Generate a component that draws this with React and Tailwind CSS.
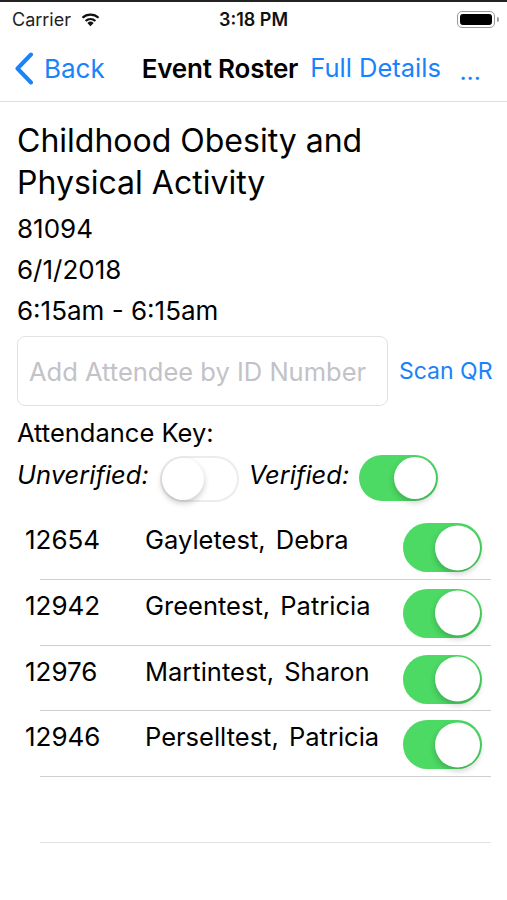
import { useState } from 'react'

const font = { fontFamily: 'Inter, "Noto Sans", sans-serif' }

const Toggle = ({ on, onChange, size = 'lg' }) => {
  const box = size === 'lg' ? 'w-[79px] h-[49px]' : 'w-[79px] h-[46px]'
  const knob = size === 'lg' ? 'w-[45px] h-[45px]' : 'w-[42px] h-[42px]'
  return (
    <button
      onClick={onChange}
      className={`relative shrink-0 rounded-full ${box} ${
        on ? 'bg-[#4cd964]' : 'bg-white border-2 border-[#ececec]'
      }`}
    >
      <span
        className={`absolute top-1/2 -translate-y-1/2 rounded-full bg-white shadow-[0_3px_6px_rgba(0,0,0,0.22)] ${knob} ${
          on ? 'right-[2px]' : 'left-0'
        }`}
      />
    </button>
  )
}

const attendees = [
  { id: '12654', name: 'Gayletest, Debra' },
  { id: '12942', name: 'Greentest, Patricia' },
  { id: '12976', name: 'Martintest, Sharon' },
  { id: '12946', name: 'Perselltest, Patricia' },
]

export default function App() {
  const [checked, setChecked] = useState(attendees.map(() => true))
  const [keyOff, setKeyOff] = useState(false)
  const [keyOn, setKeyOn] = useState(true)

  return (
    <div className="w-[507px] h-[900px] bg-white text-black overflow-hidden" style={font}>
      {/* status bar */}
      <div className="border-t-2 border-[#222] h-[36px] flex items-center pl-[12px] pr-[8px] relative">
        <div className="flex items-center gap-[9px] text-[18px] text-[#222]">
          <span>Carrier</span>
          <svg width="21" height="16" viewBox="0 0 20 15">
            <path d="M10 14.5 L7 11.2 A4.5 4.5 0 0 1 13 11.2 Z" fill="#111" />
            <path d="M4.6 8.6 A8 8 0 0 1 15.4 8.6 L13.9 10.2 A6 6 0 0 0 6.1 10.2 Z" fill="#111" />
            <path d="M1.6 5.5 A12.5 12.5 0 0 1 18.4 5.5 L16.9 7.1 A10.3 10.3 0 0 0 3.1 7.1 Z" fill="#111" />
          </svg>
        </div>
        <div className="absolute left-1/2 -translate-x-1/2 text-[18px] font-semibold text-[#111]">3:18 PM</div>
        <div className="ml-auto flex items-center gap-[2px]">
          <div className="w-[38px] h-[17px] rounded-[5px] border-[1.5px] border-[#999] p-[2px]">
            <div className="w-full h-full bg-black rounded-[3px]" />
          </div>
          <div className="w-[2px] h-[5px] bg-[#999] rounded-r" />
        </div>
      </div>

      {/* nav bar */}
      <div className="h-[66px] flex items-center border-b border-[#dedede] pl-[14px] pr-[26px]">
        <button className="flex items-center gap-[10px] text-[#1a82fb] text-[26px]">
          <svg width="20" height="33" viewBox="0 0 20 33">
            <path d="M17 2.5 L3.5 16.5 L17 30.5" fill="none" stroke="#1a82fb" strokeWidth="4" strokeLinecap="round" strokeLinejoin="round" />
          </svg>
          <span>Back</span>
        </button>
        <div className="ml-[37px] text-[26px] font-semibold tracking-[-0.2px]">Event Roster</div>
        <div className="ml-[12px] text-[25.5px] text-[#1a82fb]">Full Details</div>
        <div className="ml-auto text-[25px] text-[#1a82fb] leading-none mt-[6px]">...</div>
      </div>

      {/* event details */}
      <div className="px-[17px] pt-[18px]">
        <h1 className="w-[380px] text-[32px] leading-[42px]">Childhood Obesity and Physical Activity</h1>
        <div className="mt-[4px] text-[26px] leading-[41px]">
          <div>81094</div>
          <div>6/1/2018</div>
          <div>6:15am - 6:15am</div>
        </div>

        <div className="flex items-center mt-[5px]">
          <input
            placeholder="Add Attendee by ID Number"
            className="shrink-0 w-[371px] h-[70px] rounded-[8px] border border-[#e2e2e2] px-[11px] text-[25.5px] placeholder:text-[#c2c2c7] outline-none"
          />
          <button className="ml-[11px] whitespace-nowrap text-[23px] text-[#1a82fb]">Scan QR</button>
        </div>

        <div className="mt-[9px] text-[25.5px] leading-[36px]">Attendance Key:</div>
        <div className="flex items-center mt-[4px]">
          <span className="italic text-[25.5px] -mt-[12px]">Unverified:</span>
          <div className="ml-[11px]">
            <Toggle size="sm" on={keyOff} onChange={() => setKeyOff(!keyOff)} />
          </div>
          <span className="italic text-[25.5px] ml-[10px] -mt-[12px]">Verified:</span>
          <div className="ml-[10px]">
            <Toggle size="sm" on={keyOn} onChange={() => setKeyOn(!keyOn)} />
          </div>
        </div>
      </div>

      {/* roster */}
      <div className="mt-[7px]">
        {attendees.map((a, i) => (
          <div key={a.id} className="ml-[40px] mr-[16px] h-[65.75px] flex items-start border-b border-[#cfcfcf]">
            <span className="-ml-[15px] w-[120px] text-[26px] leading-[36px] mt-[8px]">{a.id}</span>
            <span className="text-[25.5px] leading-[36px] mt-[8px] [word-spacing:3px]">{a.name}</span>
            <div className="ml-auto mr-[9px] mt-[9px]">
              <Toggle
                on={checked[i]}
                onChange={() => setChecked(checked.map((c, j) => (j === i ? !c : c)))}
              />
            </div>
          </div>
        ))}
        <div className="ml-[40px] mr-[16px] h-[65.75px] border-b border-[#e2e2e2]" />
      </div>
    </div>
  )
}
